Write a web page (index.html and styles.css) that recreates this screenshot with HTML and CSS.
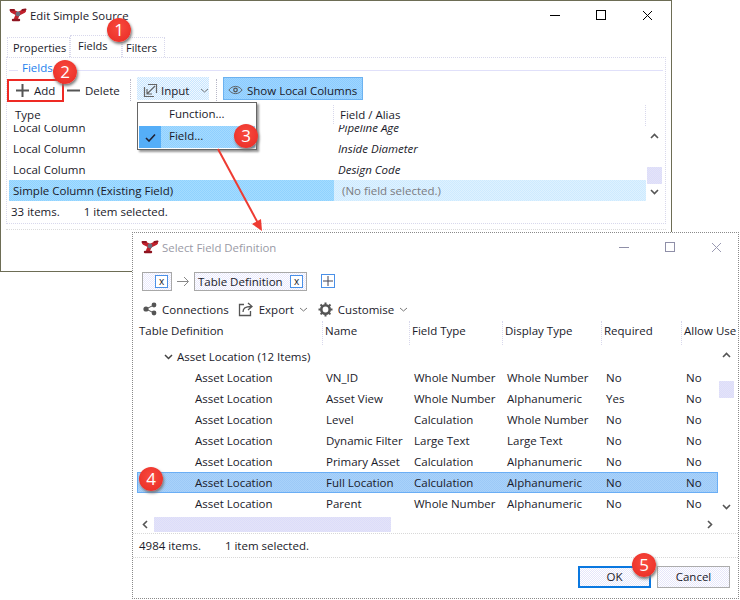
FILE: index.html
```html
<!DOCTYPE html>
<html lang="en">
  <head>
    <meta charset="UTF-8" />
    <title>Edit Simple Source</title>
    <link rel="stylesheet" href="styles.css">
  </head>
  <body>
    <svg width="0" height="0" class="defs">
      <symbol id="logo" viewBox="0 0 18 14">
        <path d="M9 6 L3 3 M9 6 L15 3 M9 6 L7 10.5" stroke="#c2202c" stroke-width="4" stroke-linecap="round" fill="none" />
        <path d="M1.5 2 L5 2 M13.5 2 L16.5 1.5" stroke="#8e1420" stroke-width="2" stroke-linecap="round" fill="none" />
        <path d="M4 12 L10 12" stroke="#8e1420" stroke-width="2.4" stroke-linecap="round" fill="none" />
        <circle cx="9" cy="6" r="2.4" fill="#6a6c7c" />
      </symbol>
      <symbol id="close-x" viewBox="0 0 11 11">
        <path d="M1 1 L10 10 M10 1 L1 10" stroke="currentColor" fill="none" />
      </symbol>
    </svg>

    <!-- Edit Simple Source window -->
    <section class="win win-source">
      <header class="titlebar">
        <svg class="logo"><use href="#logo" /></svg>
        <span class="title">Edit Simple Source</span>
        <span class="caption-buttons">
          <svg width="11" height="11"><path d="M0 5.5 H10" stroke="#000" /></svg>
          <svg width="11" height="11"><rect x="0.5" y="0.5" width="9" height="9" fill="none" stroke="#000" /></svg>
          <svg width="11" height="11"><use href="#close-x" /></svg>
        </span>
      </header>

      <nav class="tabs">
        <span class="tab tab-properties">Properties</span>
        <span class="tab tab-active">Fields</span>
        <span class="tab tab-filters">Filters</span>
      </nav>

      <div class="group">
        <div class="legend"><span>Fields</span></div>
        <div class="toolbar">
          <span class="tool tool-add">
            <svg width="15" height="15"><path d="M7.5 1 V14 M1 7.5 H14" stroke="#555" stroke-width="2" fill="none" /></svg>
            Add
          </span>
          <span class="tool tool-delete">
            <svg width="15" height="15"><path d="M1 7.5 H14" stroke="#555" stroke-width="2" fill="none" /></svg>
            Delete
          </span>
          <i class="sep"></i>
          <span class="tool tool-input">
            <svg width="15" height="15"><path d="M1.5 4 V13.5 H11 M5 1.5 H13.5 V10 M12 3 L4 11 M4 6 V11 H9" stroke="#666" stroke-width="1.2" fill="none" /></svg>
            Input
            <svg class="chev" width="9" height="5"><path d="M1 1 L4.5 4 L8 1" stroke="#777" fill="none" /></svg>
          </span>
          <i class="sep"></i>
          <span class="tool tool-show">
            <svg width="15" height="12" viewBox="0 0 17 13"><path d="M1 6.5 C5 1 12 1 16 6.5 C12 12 5 12 1 6.5 Z" stroke="#555" fill="none" /><circle cx="8.5" cy="6.5" r="2" fill="none" stroke="#555" stroke-width="1.4" /></svg>
            Show Local Columns
          </span>
        </div>

        <div class="source-grid">
          <div class="source-head">
            <span>Type</span>
            <span class="head-field">Field / Alias</span>
            <i class="head-end"></i>
          </div>
          <div class="source-rows">
            <div class="source-row row-clip"><span>Local Column</span><em>Pipeline Age</em></div>
            <div class="source-row"><span>Local Column</span><em>Inside Diameter</em></div>
            <div class="source-row"><span>Local Column</span><em>Design Code</em></div>
            <div class="source-row source-sel"><span>Simple Column (Existing Field)</span><span class="no-field">(No field selected.)</span></div>
          </div>
          <div class="vscroll vscroll-source">
            <svg class="arrow" width="9" height="6"><path d="M1 5 L4.5 1.5 L8 5" stroke="#555" stroke-width="1.6" fill="none" /></svg>
            <i class="thumb"></i>
            <svg class="arrow" width="9" height="6"><path d="M1 1 L4.5 4.5 L8 1" stroke="#555" stroke-width="1.6" fill="none" /></svg>
          </div>
        </div>
        <div class="status status-source"><span>33 items.</span><span>1 item selected.</span></div>
      </div>
      <i class="rule"></i>
    </section>

    <!-- Select Field Definition dialog -->
    <section class="win win-select">
      <header class="titlebar titlebar-dim">
        <svg class="logo"><use href="#logo" /></svg>
        <span class="title">Select Field Definition</span>
        <span class="caption-buttons caption-dim">
          <svg width="11" height="11"><path d="M0 5.5 H10" stroke="#8f8fa8" /></svg>
          <svg width="11" height="11"><rect x="0.5" y="0.5" width="9" height="9" fill="none" stroke="#8f8fa8" /></svg>
          <svg width="11" height="11"><use href="#close-x" /></svg>
        </span>
      </header>

      <div class="crumbs">
        <span class="chip chip-empty"><b class="chip-x">x</b></span>
        <svg width="12" height="11"><path d="M0 5.5 H11 M7 1 L11.5 5.5 L7 10" stroke="#888" fill="none" /></svg>
        <span class="chip">Table Definition<b class="chip-x">x</b></span>
        <span class="chip-add"><svg width="10" height="10"><path d="M5 0 V10 M0 5 H10" stroke="#445" fill="none" /></svg></span>
      </div>

      <div class="toolbar-select">
        <span class="tool">
          <svg width="14" height="14"><path d="M3 7 L11 3 M3 7 L11 11" stroke="#555" fill="none" /><circle cx="3" cy="7" r="2.6" fill="#555" /><circle cx="11" cy="3" r="2.4" fill="#555" /><circle cx="11" cy="11" r="2.4" fill="#555" /></svg>
          Connections
        </span>
        <span class="tool">
          <svg width="16" height="15"><path d="M6 2.5 H1.5 V13.5 H12.5 V9 M5 10 C5 6 8 4.5 13 4.5 M10 1 L14 4.5 L10 8" stroke="#555" stroke-width="1.3" fill="none" /></svg>
          Export
          <svg class="chev" width="9" height="5"><path d="M1 1 L4.5 4 L8 1" stroke="#777" fill="none" /></svg>
        </span>
        <span class="tool tool-customise">
          <svg width="15" height="15"><circle cx="7.5" cy="7.5" r="4.2" fill="none" stroke="#555" stroke-width="2.6" /><path d="M7.5 0.5 V14.5 M0.5 7.5 H14.5 M2.5 2.5 L12.5 12.5 M12.5 2.5 L2.5 12.5" stroke="#555" stroke-width="2" stroke-dasharray="2.2 9.6" /></svg>
          Customise
          <svg class="chev" width="9" height="5"><path d="M1 1 L4.5 4 L8 1" stroke="#777" fill="none" /></svg>
        </span>
      </div>

      <div class="def-head">
        <span>Table Definition</span>
        <span>Name</span>
        <span>Field Type</span>
        <span>Display Type</span>
        <span>Required</span>
        <span>Allow Use</span>
      </div>

      <div class="def-body">
        <div class="def-group">
          <svg width="9" height="6"><path d="M1 1 L4.5 4.5 L8 1" stroke="#444" stroke-width="1.5" fill="none" /></svg>
          Asset Location (12 Items)
        </div>
        <div class="def-row"><span>Asset Location</span><span>VN_ID</span><span>Whole Number</span><span>Whole Number</span><span>No</span><span>No</span></div>
        <div class="def-row"><span>Asset Location</span><span>Asset View</span><span>Whole Number</span><span>Alphanumeric</span><span>Yes</span><span>No</span></div>
        <div class="def-row"><span>Asset Location</span><span>Level</span><span>Calculation</span><span>Whole Number</span><span>No</span><span>No</span></div>
        <div class="def-row"><span>Asset Location</span><span>Dynamic Filter</span><span>Large Text</span><span>Large Text</span><span>No</span><span>No</span></div>
        <div class="def-row"><span>Asset Location</span><span>Primary Asset</span><span>Calculation</span><span>Alphanumeric</span><span>No</span><span>No</span></div>
        <div class="def-row def-sel"><span>Asset Location</span><span>Full Location</span><span>Calculation</span><span>Alphanumeric</span><span>No</span><span>No</span></div>
        <div class="def-row"><span>Asset Location</span><span>Parent</span><span>Whole Number</span><span>Alphanumeric</span><span>No</span><span>No</span></div>
        <div class="vscroll vscroll-def">
          <svg class="arrow" width="9" height="6"><path d="M1 5 L4.5 1.5 L8 5" stroke="#555" stroke-width="1.6" fill="none" /></svg>
          <i class="thumb"></i>
          <svg class="arrow" width="9" height="6"><path d="M1 1 L4.5 4.5 L8 1" stroke="#555" stroke-width="1.6" fill="none" /></svg>
        </div>
      </div>

      <div class="hscroll">
        <svg width="6" height="9"><path d="M5 1 L1.5 4.5 L5 8" stroke="#555" stroke-width="1.6" fill="none" /></svg>
        <i class="hthumb"></i>
        <svg class="hscroll-end" width="6" height="9"><path d="M1 1 L4.5 4.5 L1 8" stroke="#555" stroke-width="1.6" fill="none" /></svg>
      </div>
      <div class="status status-def"><span>4984 items.</span><span>1 item selected.</span></div>
      <footer class="buttons">
        <span class="btn btn-ok">OK</span>
        <span class="btn">Cancel</span>
      </footer>
    </section>

    <!-- Input dropdown, over both the toolbar and the grid -->
    <div class="menu">
      <div class="menu-item"><span class="menu-gutter"></span>Function...</div>
      <div class="menu-item menu-on">
        <span class="menu-gutter"><svg width="11" height="9"><path d="M1 5 L4 8 L10 1.5" stroke="#223" stroke-width="1.6" fill="none" /></svg></span>Field...
      </div>
    </div>

    <!-- Callouts -->
    <i class="add-box"></i>
    <svg class="callout-arrow" width="60" height="92">
      <path d="M2 1 L43 77" stroke="#ee3b32" stroke-width="2" fill="none" />
      <path d="M46 83 L36 76 L45 71 Z" fill="#ee3b32" />
    </svg>
    <span class="badge b1">1</span>
    <span class="badge b2">2</span>
    <span class="badge b3">3</span>
    <span class="badge b4">4</span>
    <span class="badge b5">5</span>
  </body>
</html>
```

FILE: styles.css
```css
body {
  margin: 0;
  width: 740px;
  height: 600px;
  position: relative;
  overflow: hidden;
  background: #fff;
  font-family: "Open Sans", "Noto Sans", sans-serif;
  font-size: 11.5px;
  color: #1a1a2a;
}

.defs {
  position: absolute;
}

svg {
  flex: none;
  display: block;
}

/* windows */
.win {
  position: absolute;
  box-sizing: border-box;
  background: #fff;
}

.win-source {
  left: 0;
  top: 0;
  width: 672px;
  height: 272px;
  border: 1px solid #6d6d55;
  padding: 0 5px;
}

.win-select {
  left: 132px;
  top: 232px;
  width: 607px;
  height: 367px;
  border: 1px dotted #8a8a8a;
}

.titlebar {
  display: flex;
  align-items: center;
  height: 28px;
  gap: 3px;
  padding-left: 3px;
  font-size: 11.4px;
}

.titlebar-dim {
  padding-left: 8px;
  color: #9a9aa6;
}

.logo {
  width: 18px;
  height: 14px;
}

.caption-buttons {
  margin-left: auto;
  display: flex;
  gap: 35px;
  padding-right: 13px;
  color: #000;
}

.caption-dim {
  color: #9a9ab2;
  padding-right: 16px;
}

/* tabs */
.tabs {
  display: flex;
  align-items: flex-end;
  height: 28px;
  padding-left: 1px;
  font-size: 11px;
}

.tab {
  box-sizing: border-box;
  height: 20px;
  line-height: 19px;
  padding-left: 5px;
  border: 1px dotted #d8d8ec;
  border-bottom: 0;
}

.tab-properties {
  width: 63px;
}

.tab-active {
  width: 52px;
  height: 22px;
  line-height: 20px;
  padding-left: 7px;
}

.tab-filters {
  width: 43px;
  padding-left: 3px;
}

/* fields group */
.group {
  box-sizing: border-box;
  height: 167px;
  border: 1px dotted #d8d8ec;
  padding: 0 2px;
}

.rule {
  display: block;
  margin-top: 5px;
  border-top: 1px dotted #dcdcdc;
}

.legend {
  height: 18px;
  padding-left: 9px;
  color: #1e82ee;
  line-height: 20px;
  background: linear-gradient(#e0e0fa, #e0e0fa) 0 12px / 100% 1px no-repeat;
}

.legend span {
  display: inline-block;
  height: 14px;
  line-height: 15px;
  padding: 0 6px 0 4px;
  background: #fff;
}

.toolbar {
  display: flex;
  align-items: center;
  height: 22px;
  margin-top: 3px;
}

.tool {
  display: inline-flex;
  align-items: center;
  gap: 4px;
  white-space: nowrap;
}

.tool-add {
  width: 50px;
  padding-left: 6px;
  box-sizing: border-box;
}

.tool-delete {
  margin-left: 7px;
  width: 60px;
}

.sep {
  width: 0;
  height: 22px;
  margin: 0 6px 0 4px;
  border-left: 1px dotted #b8b8c8;
}

.tool-input {
  box-sizing: border-box;
  height: 23px;
  width: 72px;
  margin: 0 3px 3px 0;
  padding: 3px 0 0 6px;
  gap: 3px;
  background: repeating-conic-gradient(#c8e6ff 0 25%, #f0f8ff 0 50%) 0 0 / 2px 2px;
}

.tool-input .chev {
  margin-left: 8px;
}

.tool-show {
  box-sizing: border-box;
  height: 23px;
  width: 140px;
  margin-bottom: 3px;
  padding: 3px 0 0 4px;
  gap: 4px;
  border: 1px solid #6cb2f0;
  background: repeating-conic-gradient(#9ed6ff 0 25%, #8ccbff 0 50%) 0 0 / 2px 2px;
}

/* fields grid */
.source-grid {
  position: relative;
  margin-top: 4px;
}

.source-head {
  display: flex;
  height: 20px;
  line-height: 19px;
  padding-left: 6px;
}

.head-field {
  position: absolute;
  left: 324px;
  padding-left: 6px;
  border-left: 1px dotted #d8d8ec;
}

.head-end {
  position: absolute;
  left: 636px;
  top: 0;
  height: 21px;
  border-left: 1px dotted #d8d8ec;
}

.source-rows {
  height: 76px;
  width: 637px;
  overflow: hidden;
}

.source-row {
  display: grid;
  grid-template-columns: 325px 1fr;
  height: 21px;
  line-height: 21px;
  padding-left: 4px;
}

.row-clip {
  margin-top: -8px;
}

.source-sel {
  padding-left: 0;
  background: repeating-conic-gradient(#cdeaff 0 25%, #dff2ff 0 50%) 0 0 / 2px 2px;
}

.source-sel span:first-child {
  background: repeating-conic-gradient(#8fd2ff 0 25%, #a5dcff 0 50%) 0 0 / 2px 2px;
  padding-left: 4px;
}

.no-field {
  color: #7b7b80;
  padding-left: 8px;
}

.status {
  display: flex;
  height: 22px;
  line-height: 22px;
}

.status-source {
  padding-left: 2px;
  gap: 24px;
}

/* scrollbars */
.vscroll {
  position: absolute;
  width: 15px;
  display: flex;
  flex-direction: column;
  align-items: center;
}

.vscroll-source {
  left: 638px;
  top: 28px;
  height: 62px;
}

.vscroll-def {
  left: 586px;
  top: 7px;
  height: 158px;
}

.thumb {
  width: 15px;
  height: 17px;
  margin-bottom: auto;
  background: repeating-conic-gradient(#dcdcfa 0 25%, #e4e4f8 0 50%) 0 0 / 2px 2px;
}

.vscroll-source .thumb {
  margin-top: 28px;
}

.vscroll-def .thumb {
  margin-top: 23px;
}

/* select dialog */
.crumbs {
  display: flex;
  align-items: center;
  gap: 5px;
  height: 20px;
  margin-top: 10px;
  padding-left: 9px;
}

.chip {
  box-sizing: border-box;
  display: flex;
  align-items: center;
  justify-content: space-between;
  height: 19px;
  width: 113px;
  padding: 0 3px;
  border: 1px solid #a8a8a8;
  background: repeating-conic-gradient(#e8e8fc 0 25%, #fff 0 50%) 0 0 / 2px 2px;
}

.chip-empty {
  width: 30px;
  justify-content: flex-end;
}

.chip-x {
  box-sizing: border-box;
  width: 13px;
  height: 13px;
  font-weight: normal;
  font-size: 10px;
  line-height: 10px;
  text-align: center;
  border: 1px solid #4a90e8;
  background: #fff;
}

.chip-add {
  box-sizing: border-box;
  width: 14px;
  height: 14px;
  margin-left: 9px;
  padding: 1px;
  border: 1px solid #4a90e8;
}

.toolbar-select {
  display: flex;
  align-items: center;
  gap: 9px;
  height: 24px;
  margin-top: 6px;
  padding-left: 10px;
}

.toolbar-select .tool {
  gap: 5px;
}

.tool-customise {
  margin-left: 1px;
}

.def-head {
  display: grid;
  grid-template-columns: 186px 87px 93px 99px 80px 1fr;
  height: 24px;
  line-height: 20px;
  padding-left: 6px;
  white-space: nowrap;
  overflow: hidden;
}

.def-head span + span {
  border-left: 1px dotted #d8d8ec;
  padding-left: 2px;
  margin-left: -3px;
}

.def-body {
  position: relative;
  box-sizing: border-box;
  height: 172px;
  padding-top: 1px;
}

.def-group {
  display: flex;
  align-items: center;
  gap: 4px;
  height: 21px;
  padding-left: 31px;
}

.def-row {
  display: grid;
  grid-template-columns: 131px 88px 93px 99px 80px 1fr;
  box-sizing: border-box;
  width: 581px;
  height: 21px;
  margin-left: 4px;
  line-height: 21px;
  padding-left: 58px;
}

.def-sel {
  background: repeating-conic-gradient(#9cc9f7 0 25%, #a9d2fa 0 50%) 0 0 / 2px 2px;
  box-shadow: inset 0 0 0 1px #6aaef5;
}

.hscroll {
  display: flex;
  align-items: center;
  height: 15px;
  padding-left: 9px;
  gap: 6px;
}

.hthumb {
  width: 237px;
  height: 15px;
  background: repeating-conic-gradient(#dcdcfa 0 25%, #e4e4f8 0 50%) 0 0 / 2px 2px;
}

.hscroll-end {
  margin-left: auto;
  margin-right: 25px;
}

.status-def {
  box-sizing: border-box;
  height: 25px;
  line-height: 23px;
  padding-left: 6px;
  gap: 24px;
  margin-top: 1px;
  border-top: 1px dotted #d8d8d8;
  border-bottom: 1px dotted #d8d8d8;
}

.buttons {
  display: flex;
  justify-content: flex-end;
  gap: 6px;
  padding: 8px 8px 0 0;
}

.btn {
  box-sizing: border-box;
  width: 73px;
  height: 22px;
  line-height: 20px;
  text-align: center;
  border: 1px solid #acacac;
  background: repeating-conic-gradient(#e6e6fa 0 25%, #fff 0 50%) 0 0 / 2px 2px;
}

.btn-ok {
  border: 2px solid #0a78e0;
  line-height: 18px;
}

/* overlays */
.menu {
  position: absolute;
  box-sizing: border-box;
  left: 137px;
  top: 102px;
  width: 120px;
  height: 48px;
  padding: 1px;
  background: #fff;
  border: 1px solid #666;
  box-shadow: 2px 2px 2px #999;
}

.menu-item {
  display: flex;
  align-items: flex-start;
  height: 22px;
  line-height: 20px;
}

.menu-gutter {
  display: flex;
  align-items: center;
  justify-content: center;
  width: 22px;
  height: 22px;
  margin-right: 8px;
}

.menu-on {
  background: repeating-conic-gradient(#8fcfff 0 25%, #a5dbff 0 50%) 0 0 / 2px 2px;
}

.menu-on .menu-gutter {
  background: #55aef8;
}

.add-box {
  position: absolute;
  left: 7px;
  top: 79px;
  width: 53px;
  height: 19px;
  border: 2px solid #ee2a24;
}

.callout-arrow {
  position: absolute;
  left: 216px;
  top: 148px;
}

.badge {
  position: absolute;
  width: 24px;
  height: 24px;
  line-height: 24px;
  text-align: center;
  border-radius: 50%;
  background: radial-gradient(circle at 50% 40%, #f84a3e, #e82a24);
  color: #fff;
  font-size: 17px;
  box-shadow: 1px 2px 3px #777;
}

.b1 { left: 107px; top: 18px; }
.b2 { left: 53px; top: 60px; }
.b3 { left: 234px; top: 124px; }
.b4 { left: 139px; top: 467px; }
.b5 { left: 632px; top: 553px; }
```
